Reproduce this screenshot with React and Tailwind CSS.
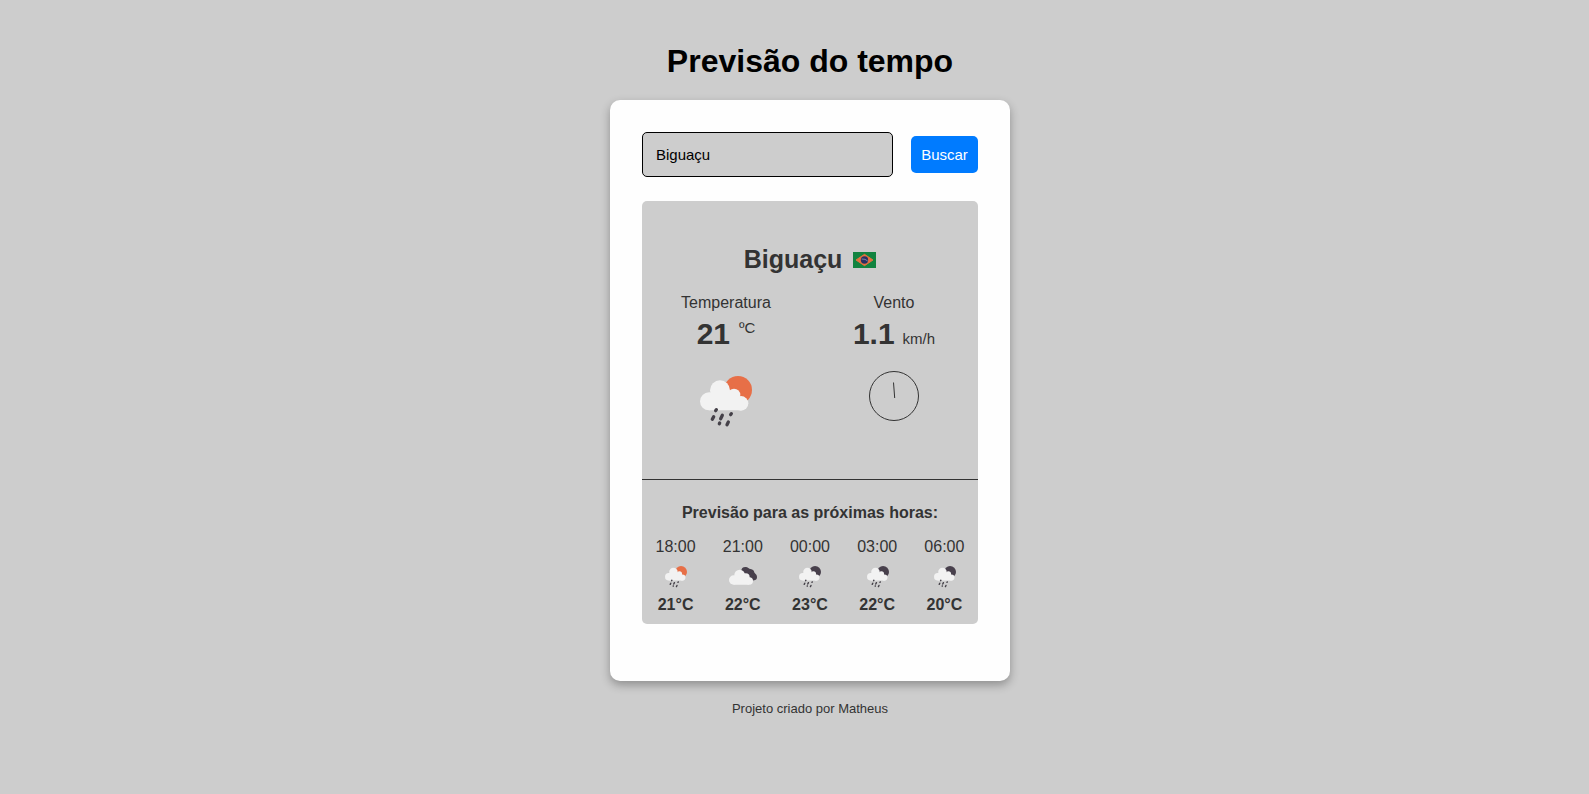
import React from "react";

function ShowerIcon({ className, disc }) {
  return (
    <svg className={className} viewBox="0 0 156 156">
      <circle cx="114" cy="42" r="42" fill={disc} />
      <g fill="#f2f2f2">
        <circle cx="27" cy="76" r="27" />
        <circle cx="60" cy="43" r="30" />
        <circle cx="102" cy="57" r="19" />
        <circle cx="123" cy="82" r="22" />
        <path d="M27 50h70l27 20v33H27z" />
      </g>
      <g stroke="#444048" strokeWidth="10" strokeLinecap="round">
        <path d="M49 101l-2 3M41 122l-4 8M67 118l-5 10M94 113l-2 3M59 141l-1 2M85 138l-4 8" />
      </g>
    </svg>
  );
}

function OvercastIcon({ className }) {
  return (
    <svg className={className} viewBox="0 0 84 54">
      <g fill="#48404c">
        <circle cx="49" cy="12" r="12" />
        <circle cx="64" cy="19" r="12" />
        <circle cx="74" cy="30" r="10" />
        <path d="M49 1l17 6 14 14-2 18-14 2-24-20z" />
      </g>
      <g fill="#f2f2f2">
        <circle cx="14" cy="39" r="14" />
        <circle cx="32" cy="24" r="16" />
        <circle cx="50" cy="31" r="12" />
        <circle cx="61" cy="42" r="11" />
        <path d="M14 28h36l10 6v19H14z" />
      </g>
    </svg>
  );
}

function BrazilFlag() {
  return (
    <svg className="mt-px h-4 w-[23px]" viewBox="0 0 69 48">
      <rect width="69" height="48" fill="#128340" />
      <path d="M9 24L34.5 7 60 24 34.500 41z" fill="#e4713f" stroke="#e4713f" strokeWidth="3" strokeLinejoin="round" />
      <circle cx="34.500" cy="24" r="11" fill="#293064" />
      <path d="M26 21q11-1 18 6" stroke="#8e94b0" strokeWidth="2.500" fill="none" />
    </svg>
  );
}

const SUN = "#e76f47";
const MOON = "#48404c";

const hours = [
  { time: "18:00", temp: "21°C", disc: SUN },
  { time: "21:00", temp: "22°C", disc: null },
  { time: "00:00", temp: "23°C", disc: MOON },
  { time: "03:00", temp: "22°C", disc: MOON },
  { time: "06:00", temp: "20°C", disc: MOON },
];

export default function App() {
  return (
    <div className="flex h-[794px] flex-col items-center bg-[#cdcdcd] pl-[31px] pt-[42px] font-['Liberation_Sans',Arial,sans-serif] text-[#333]">
      <h1 className="h-[58px] text-[32px] font-bold leading-[38px] text-black">Previsão do tempo</h1>

      <main className="h-[581px] w-[400px] rounded-[10px] bg-[#fefefe] p-8 shadow-[0_4px_10px_rgba(0,0,0,0.3)]">
        <div className="flex h-[45px] items-center justify-between">
          <input
            className="h-[45px] w-[251px] rounded-[5px] border border-black bg-[#cdcdcd] px-[13px] text-[15px] text-black outline-none"
            defaultValue="Biguaçu"
          />
          <button className="h-[37px] w-[67px] rounded-[5px] bg-[#007bff] pt-px text-[15px] leading-[20px] text-white">Buscar</button>
        </div>

        <section className="mt-6 h-[423px] rounded-[5px] bg-[#cdcdcd]">
          <div className="flex h-[278px] flex-col pt-[42px]">
            <div className="flex items-center justify-center gap-[11px]">
              <h2 className="text-[25px] font-bold leading-[32px]">Biguaçu</h2>
              <BrazilFlag />
            </div>
            <div className="mt-4 grid grid-cols-2">
              <div className="flex flex-col items-center">
                <p className="text-[16px] leading-[24px]">Temperatura</p>
                <p className="flex h-[36px] items-start gap-[9px]">
                  <span className="text-[30px] font-bold leading-[37px]">21</span>
                  <span className="pt-[3px] text-[15px] leading-[20px]">ºC</span>
                </p>
                <ShowerIcon className="mt-[25px] size-[52px]" disc={SUN} />
              </div>
              <div className="flex flex-col items-center">
                <p className="text-[16px] leading-[24px]">Vento</p>
                <p className="flex h-[36px] items-baseline gap-2">
                  <span className="text-[30px] font-bold leading-[38px]">1.1</span>
                  <span className="text-[15px]">km/h</span>
                </p>
                <svg className="mt-5 size-[50px]" viewBox="0 0 50 50" fill="none" stroke="#333">
                  <circle cx="25" cy="25" r="24.5" />
                  <path d="M24.5 11.5l1.2 15.5" />
                </svg>
              </div>
            </div>
          </div>

          <div className="h-[145px] border-t border-[#333] pt-[21px]">
            <h3 className="text-center text-[16px] font-bold leading-[24px]">Previsão para as próximas horas:</h3>
            <div className="mt-[10px] grid grid-cols-5">
              {hours.map((h) => (
                <div key={h.time} className="flex flex-col items-center">
                  <p className="text-[16px] leading-[24px]">{h.time}</p>
                  <div className="flex h-[34px] items-center pl-px">
                    {h.disc ? (
                      <ShowerIcon className="mt-px size-[22px]" disc={h.disc} />
                    ) : (
                      <OvercastIcon className="h-[18px] w-[28px]" />
                    )}
                  </div>
                  <p className="text-[16px] font-bold leading-[24px]">{h.temp}</p>
                </div>
              ))}
            </div>
          </div>
        </section>
      </main>

      <footer className="mt-[19px] text-[13px] leading-[18px]">Projeto criado por Matheus</footer>
    </div>
  );
}
